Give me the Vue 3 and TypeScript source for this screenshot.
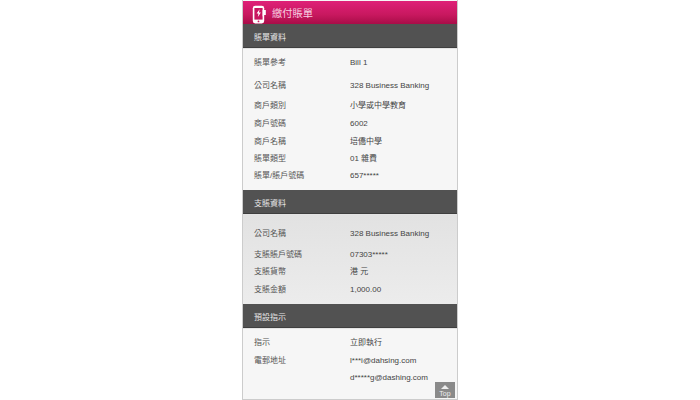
<script setup lang="ts">
interface Row { label: string; value: string; h: number }
const bill: Row[] = [
  { label: '賬單參考', value: 'Bill 1', h: 24 },
  { label: '公司名稱', value: '328 Business Banking', h: 22 },
  { label: '商戶類別', value: '小學或中學教育', h: 18 },
  { label: '商戶號碼', value: '6002', h: 18 },
  { label: '商戶名稱', value: '培僑中學', h: 18 },
  { label: '賬單類型', value: '01 雜費', h: 16 },
  { label: '賬單/賬戶號碼', value: '657*****', h: 18 },
]
const pay: Row[] = [
  { label: '公司名稱', value: '328 Business Banking', h: 24 },
  { label: '支賬賬戶號碼', value: '07303*****', h: 17 },
  { label: '支賬貨幣', value: '港 元', h: 18 },
  { label: '支賬金額', value: '1,000.00', h: 18 },
]
const preset: Row[] = [
  { label: '指示', value: '立即執行', h: 18 },
  { label: '電郵地址', value: 'l***i@dahsing.com', h: 18 },
  { label: '', value: 'd*****g@dashing.com', h: 15 },
]
</script>

<template>
  <div class="page">
    <div class="phone">
      <header class="head">
        <svg class="icon" width="15" height="20" viewBox="0 0 15 20">
          <rect x="0.8" y="0.8" width="11.4" height="17.6" rx="2.4" fill="#fff" />
          <rect x="2.4" y="3" width="8.2" height="11.6" fill="#c9165f" />
          <circle cx="6.5" cy="16.4" r="0.9" fill="#c9165f" />
          <path d="M7.6 4.2 4.6 8.6h1.9l-.7 3.4 3.1-4.6H6.9z" fill="#fff" />
          <path d="M10.6 5h3.2v5h-1.6l-1.6 1.6z" fill="#fff" />
        </svg>
        <span class="title">繳付賬單</span>
      </header>
      <div class="bar">賬單資料</div>
      <section class="sec first">
        <div v-for="r in bill" :key="r.label" class="row" :style="{ height: r.h + 'px' }">
          <span class="lab">{{ r.label }}</span><span class="val">{{ r.value }}</span>
        </div>
      </section>
      <div class="bar">支賬資料</div>
      <section class="sec grey">
        <div v-for="r in pay" :key="r.label" class="row" :style="{ height: r.h + 'px' }">
          <span class="lab">{{ r.label }}</span><span class="val">{{ r.value }}</span>
        </div>
      </section>
      <div class="bar">預設指示</div>
      <section class="sec last">
        <div v-for="r in preset" :key="r.value" class="row" :style="{ height: r.h + 'px' }">
          <span class="lab">{{ r.label }}</span><span class="val">{{ r.value }}</span>
        </div>
      </section>
      <div class="top">
        <i class="tri"></i>
        <span>Top</span>
      </div>
    </div>
  </div>
</template>

<style>
html, body { margin: 0; background: #fff; }
</style>

<style scoped>
.page {
  width: 700px;
  height: 400px;
  overflow: hidden;
  display: flex;
  justify-content: center;
  font-family: "Liberation Sans", "Noto Sans CJK TC", sans-serif;
  font-size: 8px;
  color: #555;
}
.phone {
  position: relative;
  width: 216px;
  height: 400px;
  padding-top: 1px;
  box-sizing: border-box;
  background: #f6f6f6;
  border-left: 1px solid #ccc;
  border-right: 1px solid #ccc;
  border-bottom: 1px solid #ccc;
}
.head {
  height: 23px;
  display: flex;
  align-items: center;
  padding-left: 9px;
  gap: 5px;
  background: linear-gradient(#df2078, #c8185f 60%, #a80d48);
  color: #f6cfe0;
  font-size: 10.25px;
}
.icon { flex: none; margin-top: 4px; }
.bar {
  height: 24px;
  box-sizing: border-box;
  padding-top: 1px;
  border-bottom: 1px solid #3f3f3f;
  display: flex;
  align-items: center;
  padding-left: 11px;
  background: #525252;
  color: #e6e6e6;
  font-size: 8px;
}
.sec {
  border-top: 1px solid #e4e4e4;
  box-sizing: border-box;
}
.first { height: 142px; padding-top: 2px; }
.grey { height: 90px; padding-top: 7px; background: linear-gradient(#e2e2e2, #ececec); }
.last { padding-top: 5px; }
.row { display: flex; align-items: center; padding-left: 11px; }
.lab { width: 96px; flex: none; line-height: 10px; }
.val { line-height: 10px; color: #444; white-space: nowrap; }
.top {
  position: absolute;
  right: 2px;
  bottom: 1px;
  width: 20px;
  height: 16px;
  background: #8a8a8a;
  color: #eee;
  font-size: 7px;
  display: flex;
  flex-direction: column;
  align-items: center;
  justify-content: flex-end;
  line-height: 9px;
}
.tri {
  width: 0;
  height: 0;
  border-left: 4px solid transparent;
  border-right: 4px solid transparent;
  border-bottom: 4px solid #eee;
}
</style>
